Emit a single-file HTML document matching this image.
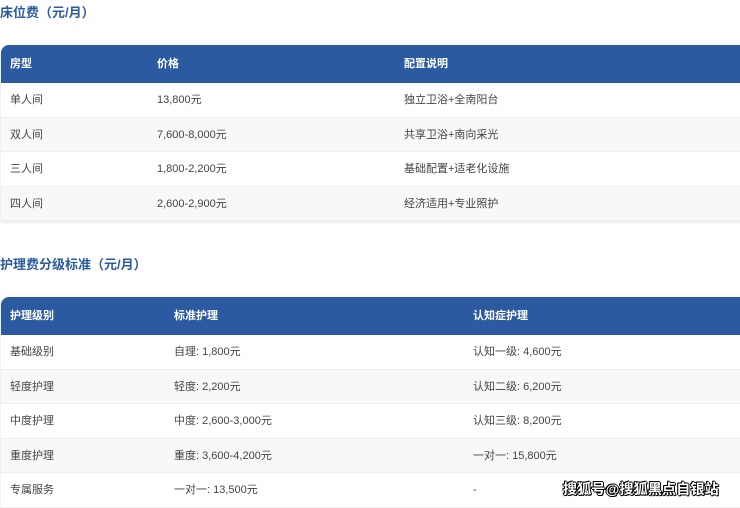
<!DOCTYPE html><html><head><meta charset="utf-8"><style>
body{margin:0;width:740px;height:504px;overflow:hidden;background:#fff;font-family:"Liberation Sans","Noto Sans CJK SC",sans-serif;font-size:11px;color:#444;position:relative}
h3{position:absolute;left:0;margin:0;font-size:13px;font-weight:bold;color:#2c5aa0}
.t{position:absolute;left:1px;width:745px;border-radius:8px 0 0 0;overflow:hidden;box-shadow:0 1px 4px rgba(0,0,0,.12)}
.r{position:relative;height:34.5px;border-bottom:1px solid #eceef2;box-sizing:border-box}
.r span{position:absolute;top:0;line-height:34px}
.h{background:#2c5aa0;color:#fff;font-weight:bold;height:38px;border:0}
.h span{line-height:38px}
.a{background:#f7f8fa}
.wm{position:absolute;left:563px;top:479px;font-size:14px;font-weight:bold;color:#fff;letter-spacing:0.2px;text-shadow:1px 0 #000,-1px 0 #000,0 1px #000,0 -1px #000,1px 1px #000,-1px -1px #000}
</style></head><body>
<h3 style="top:2px">床位费（元/月）</h3>
<div class="t" style="top:45px">
<div class="r h"><span style="left:9px">房型</span><span style="left:156px">价格</span><span style="left:403px">配置说明</span></div>
<div class="r"><span style="left:9px">单人间</span><span style="left:156px">13,800元</span><span style="left:403px">独立卫浴+全南阳台</span></div>
<div class="r a"><span style="left:9px">双人间</span><span style="left:156px">7,600-8,000元</span><span style="left:403px">共享卫浴+南向采光</span></div>
<div class="r"><span style="left:9px">三人间</span><span style="left:156px">1,800-2,200元</span><span style="left:403px">基础配置+适老化设施</span></div>
<div class="r a"><span style="left:9px">四人间</span><span style="left:156px">2,600-2,900元</span><span style="left:403px">经济适用+专业照护</span></div>
</div>
<h3 style="top:254px">护理费分级标准（元/月）</h3>
<div class="t" style="top:297px">
<div class="r h"><span style="left:9px">护理级别</span><span style="left:173px">标准护理</span><span style="left:472px">认知症护理</span></div>
<div class="r"><span style="left:9px">基础级别</span><span style="left:173px">自理: 1,800元</span><span style="left:472px">认知一级: 4,600元</span></div>
<div class="r a"><span style="left:9px">轻度护理</span><span style="left:173px">轻度: 2,200元</span><span style="left:472px">认知二级: 6,200元</span></div>
<div class="r"><span style="left:9px">中度护理</span><span style="left:173px">中度: 2,600-3,000元</span><span style="left:472px">认知三级: 8,200元</span></div>
<div class="r a"><span style="left:9px">重度护理</span><span style="left:173px">重度: 3,600-4,200元</span><span style="left:472px">一对一: 15,800元</span></div>
<div class="r"><span style="left:9px">专属服务</span><span style="left:173px">一对一: 13,500元</span><span style="left:472px">-</span></div>
</div>
<div class="wm">搜狐号@搜狐黑点自银站</div>
</body></html>
